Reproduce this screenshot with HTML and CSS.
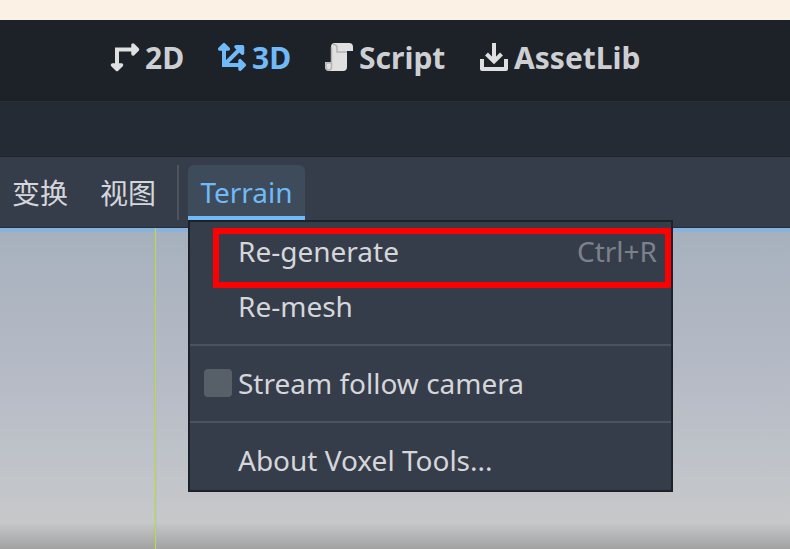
FILE: index.html
```html
<!DOCTYPE html>
<html lang="zh-CN">
<head>
<meta charset="utf-8">
<title>Godot Editor</title>
<link rel="stylesheet" href="styles.css">
</head>
<body>
<div class="page-strip"></div>
<header class="modes">
  <div class="mode mode-2d">
    <svg class="icon" viewBox="0 0 32 32"><path d="M8 24V8.500H24" fill="none" stroke="#e0e0e0" stroke-width="4"/><path d="M24 4v9l4.500-4.500zM3.500 24h9L8 28.500z" fill="#e0e0e0" stroke="#e0e0e0" stroke-width="3.500" stroke-linejoin="round"/></svg><span>2D</span>
  </div>
  <div class="mode mode-3d active">
    <svg class="icon" viewBox="0 0 32 32"><path d="M8 8V24H24M8 24L23 9" fill="none" stroke="#70bafa" stroke-width="4"/><path d="M3.700 8h8.600L8 3.700zM24 19.700v8.600l4.300-4.300zM20 5.700h6.500v6.500z" fill="#70bafa" stroke="#70bafa" stroke-width="3.500" stroke-linejoin="round"/></svg><span>3D</span>
  </div>
  <div class="mode mode-script">
    <svg class="icon" viewBox="0 0 32 32"><path d="M12 2h14q4 0 4 4v4h-6v16q0 4-4 4H6q-4 0-4-4v-5h6V6q0-4 4-4z" fill="#e0e0e0"/><path d="M10 3.500q3-.5 4 2V11h10M8.500 6v20q0 3-2.500 3M8 22H3v4q0 3 3 3" fill="none" stroke="#b3b3b3" stroke-width="1.500"/></svg><span>Script</span>
  </div>
  <div class="mode mode-assets">
    <svg class="icon" viewBox="0 0 32 32"><path d="M16 2v18M8.500 13l7.500 7.500 7.500-7.500" fill="none" stroke="#e0e0e0" stroke-width="4"/><path d="M4 18v10h24V18" fill="none" stroke="#e0e0e0" stroke-width="4" stroke-linejoin="round"/></svg><span>AssetLib</span>
  </div>
</header>
<div class="scene-tabs"></div>
<nav class="toolbar">
  <span class="tool">变换</span>
  <span class="tool">视图</span>
  <i class="divider"></i>
  <span class="tool-tab">Terrain</span>
</nav>
<main class="viewport"><i class="axis"></i></main>
<div class="menu">
  <div class="item first"><span>Re-generate</span><kbd>Ctrl+R</kbd></div>
  <div class="item">Re-mesh</div>
  <hr>
  <div class="item"><i class="check"></i>Stream follow camera</div>
  <hr>
  <div class="item">About Voxel Tools...</div>
  <div class="highlight"></div>
</div>
</body>
</html>
```
FILE: styles.css
```css
* { box-sizing: border-box; }
body {
  margin: 0;
  height: 549px;
  overflow: hidden;
  position: relative;
  display: flex;
  flex-direction: column;
  font: 28px/38px "Noto Sans", "Noto Sans CJK SC", sans-serif;
  color: #d5d6da;
  background: #1d2229;
}
.page-strip { height: 20px; background: #fbf1e4; }
.modes {
  height: 81px;
  display: flex;
  padding: 18px 0 0 109px;
  background: #1d2229;
  font-size: 30px;
  font-weight: 700;
  color: #cecfd3;
}
.mode { display: flex; height: 39px; }
.mode span { white-space: nowrap; padding-top: 1px; }
.icon { width: 32px; height: 32px; margin: 3px 4px 0 0; flex: none; }
.mode-2d { width: 107px; }
.mode-3d { width: 107px; }
.mode-script { width: 155px; }
.active { color: #70bafa; }
.scene-tabs {
  height: 56px;
  background: #252b34;
  border-top: 1px solid #2b3037;
  border-bottom: 1px solid #1e242c;
}
.toolbar {
  height: 71px;
  display: flex;
  padding: 8px 0 0 12px;
  background: #363d4a;
  border-bottom: 1px solid #252f3d;
}
.tool { width: 88px; padding-top: 9px; }
.tool + .tool { width: 77px; }
.divider { width: 2px; height: 55px; background: #4c525e; }
.tool-tab {
  width: 117px;
  height: 55px;
  margin-left: 9px;
  padding-top: 8px;
  text-align: center;
  color: #70bafa;
  background: #3e4b5b;
  border-bottom: 4px solid #70bafa;
  border-radius: 6px 6px 0 0;
}
.viewport {
  flex: 1;
  padding-left: 155px;
  border-top: 4px solid #87b3de;
  background: linear-gradient(#a7b1be 0, #b6bbc6 150px, #bfc3c9 230px, #c7c8ca 290px, #a2a2a3 317px);
}
.axis {
  display: block;
  width: 1px;
  height: calc(100% + 4px);
  margin-top: -4px;
  background: #b0e52f;
  box-shadow: -1px 0 #b9a9df40, 1px 0 #b9a9df40;
}
.menu {
  position: absolute;
  left: 188px;
  top: 220px;
  width: 485px;
  height: 272px;
  padding-top: 1px;
  background: #363d4a;
  border: 2px solid #1d2229;
}
.item {
  position: relative;
  display: flex;
  align-items: center;
  justify-content: space-between;
  height: 55px;
  padding: 0 14px 0 48px;
}
.item:has(.check) { justify-content: flex-start; }
kbd { font: inherit; color: #7d828a; }
.check {
  width: 28px;
  height: 28px;
  margin: 0 6px 0 -34px;
  border-radius: 4px;
  background: #575f69;
}
hr { height: 2px; margin: 11px 0 9px; border: 0; background: #4c525e; }
.highlight {
  position: absolute;
  left: 23px;
  top: 6px;
  width: 458px;
  height: 60px;
  border: 6px solid #f00;
}
```
